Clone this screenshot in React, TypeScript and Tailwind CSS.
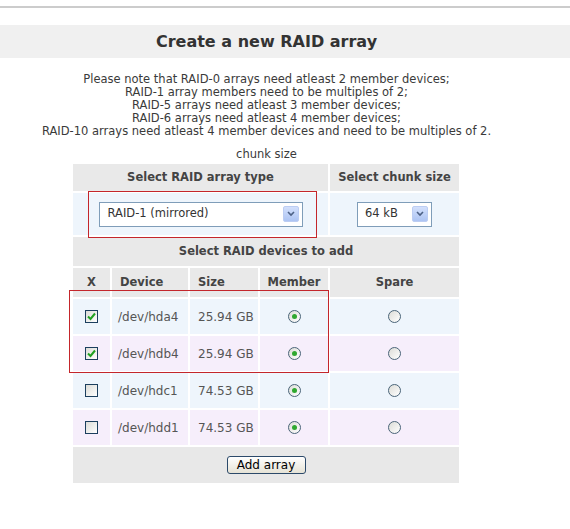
import React from "react";

const rows = [
  { dev: "/dev/hda4", size: "25.94 GB", checked: true },
  { dev: "/dev/hdb4", size: "25.94 GB", checked: true },
  { dev: "/dev/hdc1", size: "74.53 GB", checked: false },
  { dev: "/dev/hdd1", size: "74.53 GB", checked: false },
];

function Checkbox({ checked }: { checked: boolean }) {
  return (
    <div className="w-[13px] h-[13px] border border-[#1c3f5e] bg-gradient-to-br from-[#dcdcd7] to-white flex items-center justify-center">
      {checked && (
        <svg width="9" height="9" viewBox="0 0 9 9">
          <path d="M1 4.5 L3.5 7 L8 1.5" fill="none" stroke="#21a121" strokeWidth="2" />
        </svg>
      )}
    </div>
  );
}

function Radio({ checked }: { checked: boolean }) {
  return (
    <div className="w-[13px] h-[13px] rounded-full border border-[#4a6478] bg-gradient-to-br from-[#dcdcd7] to-white flex items-center justify-center">
      {checked && <div className="w-[5px] h-[5px] rounded-full bg-[#2fa82f]" />}
    </div>
  );
}

function DropBtn() {
  return (
    <div className="w-[16px] h-[16px] rounded-[2px] bg-gradient-to-b from-[#d3e0fc] to-[#adc4f3] border border-[#bccdf3] flex items-center justify-center">
      <svg width="8" height="6" viewBox="0 0 8 6">
        <path d="M1 1 L4 4 L7 1" fill="none" stroke="#4d6185" strokeWidth="1.6" />
      </svg>
    </div>
  );
}

export default function App() {
  return (
    <div className="w-[570px] h-[529px] bg-white text-[#333] font-['DejaVu_Sans',Verdana,sans-serif] overflow-hidden">
      <div className="mt-[6px] h-[2px] bg-[#cccccc]" />
      <div className="mt-[17px] h-[33px] bg-[#f0f0f0] flex">
        <div className="w-[533px] flex items-center justify-center text-[16px] font-bold text-[#333]">
          Create a new RAID array
        </div>
      </div>
      <div className="w-[533px] mt-[15px] text-center text-[11.5px] leading-[13px] text-[#3a3a3a]">
        <p>Please note that RAID-0 arrays need atleast 2 member devices;</p>
        <p>RAID-1 array members need to be multiples of 2;</p>
        <p>RAID-5 arrays need atleast 3 member devices;</p>
        <p>RAID-6 arrays need atleast 4 member devices;</p>
        <p>RAID-10 arrays need atleast 4 member devices and need to be multiples of 2.</p>
        <p className="mt-[10px]">chunk size</p>
      </div>
      <div className="mt-[3px] ml-[73px] w-[386px] grid grid-cols-[37px_76px_68px_68px_129px] gap-[2px] text-[11.5px] text-[#444]">
        <div className="col-span-4 h-[27px] bg-[#e9e9e9] font-bold flex items-center justify-center">Select RAID array type</div>
        <div className="h-[27px] bg-[#e9e9e9] font-bold flex items-center justify-center">Select chunk size</div>

        <div className="col-span-4 h-[42px] bg-[#eef5fc] flex items-center justify-center relative">
          <div className="w-[204px] h-[25px] bg-white border border-[#7f9db9] flex items-center justify-between pl-[8px] pr-[3px] text-[11.5px] text-[#333]">
            <span>RAID-1 (mirrored)</span>
            <DropBtn />
          </div>
          <div className="absolute left-[15px] top-[-2px] w-[229px] h-[47px] border border-[#c4262b]" />
        </div>
        <div className="h-[42px] bg-[#eef5fc] flex items-center justify-center">
          <div className="w-[75px] h-[25px] bg-white border border-[#7f9db9] flex items-center justify-between pl-[7px] pr-[3px] text-[11.5px] text-[#333]">
            <span>64 kB</span>
            <DropBtn />
          </div>
        </div>

        <div className="col-span-5 h-[29px] bg-[#e9e9e9] font-bold flex items-center justify-center">Select RAID devices to add</div>

        <div className="h-[29px] bg-[#e9e9e9] font-bold flex items-center justify-center">X</div>
        <div className="h-[29px] bg-[#e9e9e9] font-bold flex items-center pl-[8px]">Device</div>
        <div className="h-[29px] bg-[#e9e9e9] font-bold flex items-center pl-[8px]">Size</div>
        <div className="h-[29px] bg-[#e9e9e9] font-bold flex items-center justify-center">Member</div>
        <div className="h-[29px] bg-[#e9e9e9] font-bold flex items-center justify-center">Spare</div>

        {rows.map((r, i) => {
          const bg = i % 2 === 0 ? "bg-[#eef5fc]" : "bg-[#f6eefb]";
          return (
            <React.Fragment key={r.dev}>
              <div className={`h-[35px] ${bg} flex items-center justify-center relative`}>
                <Checkbox checked={r.checked} />
                {i === 0 && (
                  <div className="absolute left-[-4px] top-[-9px] w-[260px] h-[83px] border border-[#c4262b] pointer-events-none" />
                )}
              </div>
              <div className={`h-[35px] ${bg} flex items-center pl-[6px] text-[12px] text-[#555]`}>{r.dev}</div>
              <div className={`h-[35px] ${bg} flex items-center pl-[8px] text-[12px] text-[#555]`}>{r.size}</div>
              <div className={`h-[35px] ${bg} flex items-center justify-center`}>
                <Radio checked />
              </div>
              <div className={`h-[35px] ${bg} flex items-center justify-center`}>
                <Radio checked={false} />
              </div>
            </React.Fragment>
          );
        })}

        <div className="col-span-5 h-[36px] bg-[#e8e8e8] flex items-center justify-center">
          <button className="w-[79px] h-[18px] rounded-[3px] border border-[#2c4a6a] bg-gradient-to-b from-white to-[#e6e3d6] text-[12px] text-black leading-none">
            Add array
          </button>
        </div>
      </div>
    </div>
  );
}
